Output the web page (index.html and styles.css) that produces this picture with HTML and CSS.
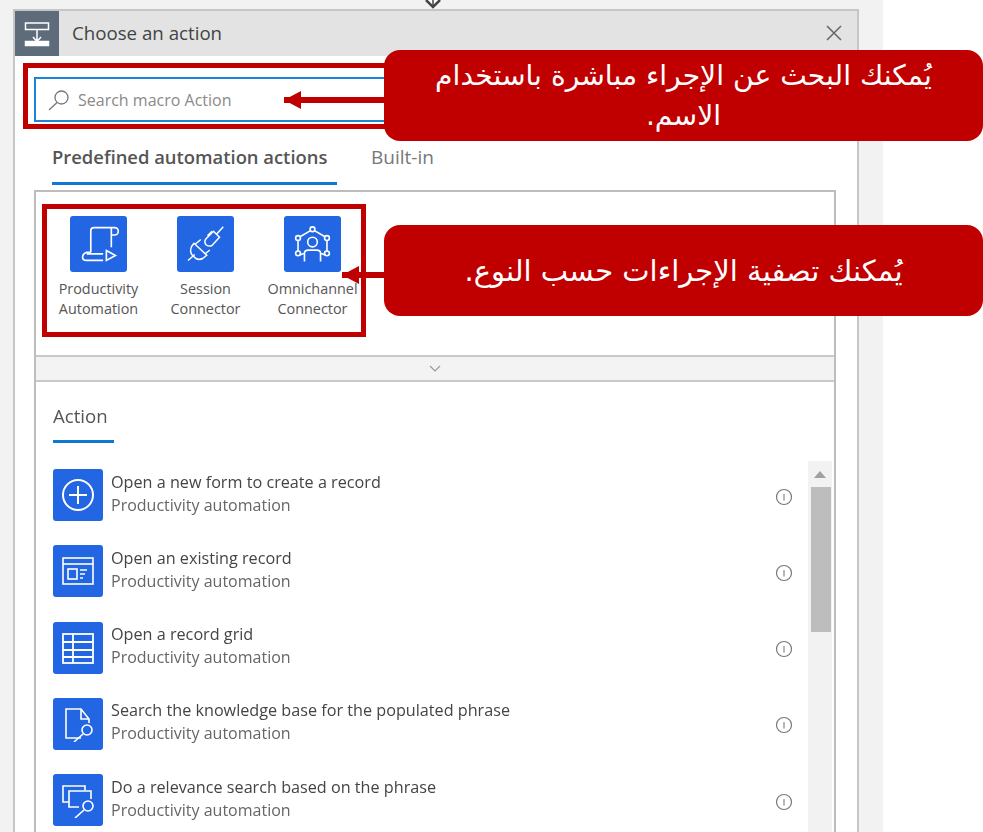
FILE: index.html
```html
<!DOCTYPE html>
<html lang="en">
<head>
  <meta charset="UTF-8">
  <meta name="viewport" content="width=device-width, initial-scale=1.0">
  <title>Choose an action</title>
  <link rel="stylesheet" href="styles.css">
</head>
<body>
  <div class="canvas">
    <svg class="flow-arrow" width="20" height="9" viewBox="0 0 20 9"><path d="M3 0 L10 7 L17 0" fill="#fff" stroke="#444" stroke-width="2.5"/><path d="M10 0 V6" stroke="#444" stroke-width="1.5"/></svg>

    <div class="panel">
      <div class="panel-head">
        <div class="head-icon">
          <svg width="44" height="45" viewBox="0 0 44 45" fill="none" stroke="#fff" stroke-width="1.5">
            <rect x="10.5" y="12" width="23" height="6.5"/>
            <path d="M22 18.5 V30 M18 26 L22 30.5 L26 26"/>
            <rect x="10.5" y="30.5" width="23" height="4" fill="#fff"/>
          </svg>
        </div>
        <div class="head-title">Choose an action</div>
        <svg class="head-close" width="18" height="18" viewBox="0 0 18 18" stroke="#666" stroke-width="1.5"><path d="M2 2 L16 16 M16 2 L2 16"/></svg>
      </div>

      <div class="panel-body">
        <div class="search">
          <svg width="24" height="22" viewBox="0 0 24 22" fill="none" stroke="#777" stroke-width="1.3"><circle cx="14.5" cy="8.5" r="6.5"/><path d="M10 13.5 L2 21"/></svg>
          <span>Search macro Action</span>
        </div>

        <div class="tabs">
          <div class="tab active">Predefined automation actions</div>
          <div class="tab">Built-in</div>
        </div>

        <div class="box">
          <div class="filters">
            <div class="filter">
              <div class="tile">
                <svg width="46" height="46" viewBox="-3 -2 56 56" fill="none" stroke="#fff" stroke-width="2">
                  <path d="M15 36 V10 Q15 6 19 6 H44 M44 6 a4 4 0 0 1 0 9 H40 V6 M40 15 V30 M15 36 H10 Q5 38 5 42 Q5 46 10 46 H30 M10 38 H30"/>
                  <path d="M34 34 L45 40 L34 46 Z"/>
                </svg>
              </div>
              <div class="filter-name">Productivity<br>Automation</div>
            </div>
            <div class="filter">
              <div class="tile">
                <svg width="42" height="42" viewBox="0 0 56 56" fill="none" stroke="#fff" stroke-width="2">
                  <path d="M4 50 L13 42 M12 27 L29 43 L24 47 Q19 50 14 47 L9 42 Q6 37 9 31 Z M21 22 L14 28 M33 36 L27 41"/>
                  <path d="M28 21 L38 11 L46 19 L36 30 Q32 32 28 29 Q25 25 28 21 Z M42 15 L51 5 M30 17 L36 11"/>
                </svg>
              </div>
              <div class="filter-name">Session<br>Connector</div>
            </div>
            <div class="filter">
              <div class="tile">
                <svg width="45" height="45" viewBox="0 -3 56 56" fill="none" stroke="#fff" stroke-width="2">
                  <circle cx="28" cy="6" r="3"/><circle cx="10" cy="17" r="3"/><circle cx="46" cy="17" r="3"/><circle cx="10" cy="36" r="3"/><circle cx="46" cy="36" r="3"/>
                  <path d="M25 8 L13 15 M31 8 L43 15 M10 20 V33 M46 20 V33"/>
                  <circle cx="28" cy="22" r="6"/>
                  <path d="M18 46 V36 Q18 32 23 32 H33 Q38 32 38 36 V46 M12 38 L18 36 M44 38 L38 36"/>
                </svg>
              </div>
              <div class="filter-name">Omnichannel<br>Connector</div>
            </div>
          </div>

          <div class="collapse-strip">
            <svg width="12" height="7" viewBox="0 0 12 7" fill="none" stroke="#999" stroke-width="1.2"><path d="M1 1 L6 6 L11 1"/></svg>
          </div>

          <div class="actions">
            <div class="actions-title">Action</div>
            <div class="action-area">
              <div class="action-list">
                <div class="action">
                  <div class="action-tile">
                    <svg width="36" height="36" viewBox="0 0 36 36" fill="none" stroke="#fff" stroke-width="2"><circle cx="18" cy="18" r="15"/><path d="M18 9 V27 M9 18 H27"/></svg>
                  </div>
                  <div class="action-text">
                    <div class="action-name">Open a new form to create a record</div>
                    <div class="action-sub">Productivity automation</div>
                  </div>
                  <svg class="info" width="18" height="18" viewBox="0 0 18 18" fill="none"><circle cx="9" cy="9" r="7.5" stroke="#777" stroke-width="1.2"/><path d="M9 6 V12.5" stroke="#999" stroke-width="1.4"/></svg>
                </div>
                <div class="action">
                  <div class="action-tile">
                    <svg width="36" height="36" viewBox="0 0 36 36" fill="none" stroke="#fff" stroke-width="1.6"><rect x="3" y="5" width="30" height="26"/><path d="M3 11 H33"/><rect x="8" y="16" width="9" height="10"/><path d="M20 17 H27 M20 21 H25 M20 25 H23"/></svg>
                  </div>
                  <div class="action-text">
                    <div class="action-name">Open an existing record</div>
                    <div class="action-sub">Productivity automation</div>
                  </div>
                  <svg class="info" width="18" height="18" viewBox="0 0 18 18" fill="none"><circle cx="9" cy="9" r="7.5" stroke="#777" stroke-width="1.2"/><path d="M9 6 V12.5" stroke="#999" stroke-width="1.4"/></svg>
                </div>
                <div class="action">
                  <div class="action-tile">
                    <svg width="36" height="36" viewBox="0 0 36 36" fill="none" stroke="#fff" stroke-width="1.8"><rect x="3" y="4" width="30" height="29"/><path d="M3 12 H33 M3 20 H33 M3 27 H33 M13 4 V33"/></svg>
                  </div>
                  <div class="action-text">
                    <div class="action-name">Open a record grid</div>
                    <div class="action-sub">Productivity automation</div>
                  </div>
                  <svg class="info" width="18" height="18" viewBox="0 0 18 18" fill="none"><circle cx="9" cy="9" r="7.5" stroke="#777" stroke-width="1.2"/><path d="M9 6 V12.5" stroke="#999" stroke-width="1.4"/></svg>
                </div>
                <div class="action">
                  <div class="action-tile">
                    <svg width="36" height="36" viewBox="0 0 36 36" fill="none" stroke="#fff" stroke-width="1.6"><path d="M21 32 H6 V3 H21 L29 13 V17 M21 3 V13 H29"/><circle cx="27" cy="24" r="5"/><path d="M23 28 L14 36"/></svg>
                  </div>
                  <div class="action-text">
                    <div class="action-name">Search the knowledge base for the populated phrase</div>
                    <div class="action-sub">Productivity automation</div>
                  </div>
                  <svg class="info" width="18" height="18" viewBox="0 0 18 18" fill="none"><circle cx="9" cy="9" r="7.5" stroke="#777" stroke-width="1.2"/><path d="M9 6 V12.5" stroke="#999" stroke-width="1.4"/></svg>
                </div>
                <div class="action">
                  <div class="action-tile">
                    <svg width="36" height="36" viewBox="0 0 36 36" fill="none" stroke="#fff" stroke-width="1.6"><path d="M9 20 H3 V4 H25 V8"/><path d="M19 25 H9 V9 H31 V17"/><circle cx="28" cy="24" r="5"/><path d="M24 28 L15 36"/></svg>
                  </div>
                  <div class="action-text">
                    <div class="action-name">Do a relevance search based on the phrase</div>
                    <div class="action-sub">Productivity automation</div>
                  </div>
                  <svg class="info" width="18" height="18" viewBox="0 0 18 18" fill="none"><circle cx="9" cy="9" r="7.5" stroke="#777" stroke-width="1.2"/><path d="M9 6 V12.5" stroke="#999" stroke-width="1.4"/></svg>
                </div>
              </div>
              <div class="scrollbar">
                <div class="scroll-up"></div>
                <div class="scroll-thumb"></div>
              </div>
            </div>
          </div>
        </div>
      </div>
    </div>

    <!-- annotations on top of the screenshot -->
    <div class="mark mark-search"></div>
    <div class="mark mark-filters"></div>
    <div class="arrow arrow-search"></div>
    <div class="arrow arrow-filters"></div>
    <div class="callout callout-search" lang="ar" dir="rtl">يُمكنك البحث عن الإجراء مباشرة باستخدام الاسم.</div>
    <div class="callout callout-filters" lang="ar" dir="rtl">يُمكنك تصفية الإجراءات حسب النوع.</div>
  </div>
</body>
</html>
```

FILE: styles.css
```css
/* General styling */
html, body {
  margin: 0;
  padding: 0;
  background: #fff;
  overflow: hidden;
}

body {
  font-family: 'Open Sans', 'Liberation Sans', sans-serif;
  color: #444;
}

.canvas {
  position: relative;
  width: 983px;
  height: 832px;
  overflow: hidden;
}

/* grey page strip behind the panel */
.canvas::before {
  content: "";
  position: absolute;
  left: 0;
  top: 0;
  width: 883px;
  height: 100%;
  background: #f2f2f2;
}

.flow-arrow {
  position: absolute;
  left: 423px;
  top: 0;
}

/* Panel */
.panel {
  position: relative;
  box-sizing: border-box;
  width: 846px;
  height: 823px;
  margin: 9px 0 0 13px;
  border: 2px solid #c6c6c6;
  border-bottom: none;
  background: #fff;
  filter: blur(0.35px);
}

.panel-head {
  display: flex;
  align-items: center;
  height: 45px;
  background: #e3e3e3;
}

.head-icon {
  width: 44px;
  height: 45px;
  background: #5d6b7b;
}

.head-title {
  flex: 1;
  margin: 0 0 2px 13px;
  font-size: 18.7px;
  color: #444;
}

.head-close {
  margin: 0 14px 2px 0;
}

.panel-body {
  padding: 21px 21px 0 19px;
}

.search {
  display: flex;
  align-items: center;
  gap: 7px;
  height: 45px;
  box-sizing: border-box;
  padding-left: 11px;
  border: 2px solid #1e84d8;
  font-size: 16px;
  color: #8a8a8a;
}

/* Tabs */
.tabs {
  display: flex;
  gap: 34px;
  height: 63px;
  padding-left: 18px;
}

.tab {
  box-sizing: border-box;
  height: 63px;
  padding-top: 22px;
  font-size: 19px;
  color: #777;
}

.tab.active {
  width: 285px;
  font-size: 18.4px;
  font-weight: 600;
  color: #555;
  border-bottom: 3px solid #0f78d4;
}

.box {
  margin-top: 5px;
  border: 2px solid #bdbdbd;
  border-bottom: none;
  background: #fff;
}

/* Filter tiles */
.filters {
  display: flex;
  height: 163px;
  box-sizing: border-box;
  padding: 24px 0 0 9px;
}

.filter {
  width: 107px;
  text-align: center;
}

.tile {
  display: flex;
  align-items: center;
  justify-content: center;
  width: 57px;
  height: 56px;
  margin: 0 auto;
  border-radius: 3px;
  background: #2266e3;
}

.filter-name {
  margin-top: 7px;
  font-size: 14.4px;
  line-height: 20px;
  color: #555;
  white-space: nowrap;
}

.collapse-strip {
  display: flex;
  align-items: center;
  justify-content: center;
  height: 23px;
  border-top: 2px solid #c8c8c8;
  border-bottom: 2px solid #c8c8c8;
  background: #f3f3f3;
}

/* Action list */
.actions {
  padding: 0 2px 0 17px;
}

.actions-title {
  box-sizing: border-box;
  width: 61px;
  height: 61px;
  padding-top: 21px;
  font-size: 18.6px;
  color: #555;
  border-bottom: 3px solid #0f78d4;
}

.action-area {
  display: flex;
  margin-top: 18px;
}

.action-list {
  flex: 1;
  padding-top: 8px;
}

.action {
  display: flex;
  align-items: center;
  height: 52px;
  margin-bottom: 24.25px;
}

.action-tile {
  display: flex;
  align-items: center;
  justify-content: center;
  flex: none;
  width: 50px;
  height: 52px;
  border-radius: 3px;
  background: #2266e3;
}

.action-text {
  flex: 1;
  margin: 0 0 3px 8px;
  color: #555;
}

.action-name {
  font-size: 16.2px;
  line-height: 23px;
  color: #444;
}

.action-sub {
  font-size: 16px;
  line-height: 23px;
  color: #666;
}

.info {
  margin: 3px 15px 0 0;
}

.scrollbar {
  flex: none;
  width: 24px;
  height: 400px;
  background: #f2f2f2;
}

.scroll-up {
  width: 0;
  height: 0;
  margin: 10px auto 9px;
  border-left: 6px solid transparent;
  border-right: 6px solid transparent;
  border-bottom: 7px solid #a0a0a0;
}

.scroll-thumb {
  width: 20px;
  height: 145px;
  margin-left: 3px;
  background: #bdbdbd;
}

/* Annotations */
.mark {
  position: absolute;
  box-sizing: border-box;
  border: 5px solid #c00000;
}

.mark-search {
  left: 23px;
  top: 63px;
  width: 380px;
  height: 66px;
}

.mark-filters {
  left: 42px;
  top: 204px;
  width: 324px;
  height: 133px;
}

.arrow {
  position: absolute;
  height: 6px;
  background: #c00000;
}

.arrow::before {
  content: "";
  position: absolute;
  left: 0;
  top: -6px;
  border-top: 9px solid transparent;
  border-bottom: 9px solid transparent;
  border-right: 17px solid #c00000;
}

.arrow-search {
  left: 284px;
  top: 97px;
  width: 110px;
}

.arrow-filters {
  left: 342px;
  top: 272px;
  width: 52px;
}

.callout {
  position: absolute;
  left: 384px;
  display: flex;
  align-items: center;
  justify-content: center;
  box-sizing: border-box;
  width: 599px;
  height: 91px;
  padding: 0 48px;
  border-radius: 16px;
  background: #c00000;
  color: #fff;
  font-family: 'DejaVu Sans', sans-serif;
  font-size: 28.2px;
  line-height: 40px;
  text-align: center;
}

.callout-search {
  top: 50px;
}

.callout-filters {
  top: 225px;
  font-size: 29px;
}
```
